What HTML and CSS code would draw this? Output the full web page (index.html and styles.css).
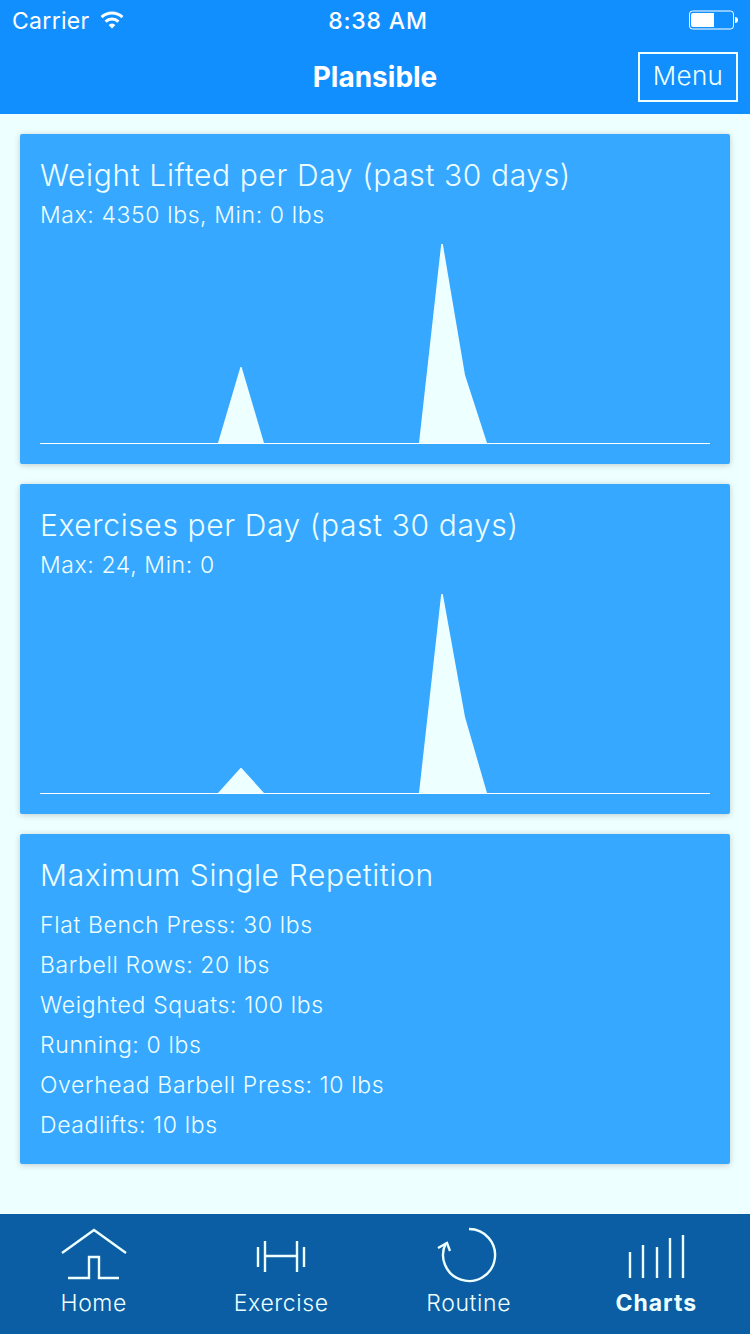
FILE: index.html
```html
<!DOCTYPE html>
<html>
<head>
	<title>Plansible</title>
	<meta charset="utf-8">
	<link rel="stylesheet" href="styles.css">
</head>

<body>
<div id="app">
	<div class="header">
		<div class="status">
			<div class="status-left">
				<span>Carrier</span>
				<svg class="wifi" width="26" height="20" viewBox="0 0 26 20">
					<path d="M13 17.5 L9.6 14 A5 5 0 0 1 16.4 14 Z" fill="#fff"/>
					<path d="M6.6 10.6 A9.2 9.2 0 0 1 19.4 10.6" class="wifi-arc"/>
					<path d="M2.6 6.2 A15 15 0 0 1 23.4 6.2" class="wifi-arc"/>
				</svg>
			</div>
			<span class="time">8:38 AM</span>
			<svg class="battery" width="50" height="20" viewBox="0 0 50 20">
				<rect x="0.5" y="1" width="44" height="18" rx="3" fill="none" stroke="#fff" stroke-width="1"/>
				<path d="M2 5 a2 2 0 0 1 2 -2 H25 V17 H4 a2 2 0 0 1 -2 -2 Z" fill="#fff"/>
				<path d="M46 7 C48 7 49 8 49 10 C49 12 48 13 46 13 Z" fill="#fff"/>
			</svg>
		</div>
		<div class="navbar">
			<span></span>
			<div class="nav-title">Plansible</div>
			<div class="nav-btn">Menu</div>
		</div>
	</div>

	<div class="main">
		<div class="card">
			<h2>Weight Lifted per Day (past 30 days)</h2>
			<p>Max: 4350 lbs, Min: 0 lbs</p>
			<svg class="chart" width="670" height="200" viewBox="0 0 670 200">
				<polygon points="178,199 200.4,123 201.6,123 224,199"/>
				<polygon points="379,199 401.2,0 402.8,0 425,131 447,199"/>
				<line x1="0" y1="199.5" x2="670" y2="199.5"/>
			</svg>
		</div>
		<div class="card">
			<h2>Exercises per Day (past 30 days)</h2>
			<p>Max: 24, Min: 0</p>
			<svg class="chart" width="670" height="200" viewBox="0 0 670 200">
				<polygon points="178,199 200.5,174 201.5,174 224,199"/>
				<polygon points="379,199 401.2,0 402.8,0 425,123 447,199"/>
				<line x1="0" y1="199.5" x2="670" y2="199.5"/>
			</svg>
		</div>
		<div class="card">
			<h2>Maximum Single Repetition</h2>
			<ul class="lifts">
				<li>Flat Bench Press: 30 lbs</li>
				<li>Barbell Rows: 20 lbs</li>
				<li>Weighted Squats: 100 lbs</li>
				<li>Running: 0 lbs</li>
				<li>Overhead Barbell Press: 10 lbs</li>
				<li>Deadlifts: 10 lbs</li>
			</ul>
		</div>
	</div>

	<div class="tabbar">
		<div class="tab">
			<svg width="80" height="60" viewBox="0 0 80 60">
				<path d="M8 29 L40 6 L72 29"/>
				<path d="M14 54 H35 V33 H45 V54 H65"/>
			</svg>
			<span>Home</span>
		</div>
		<div class="tab">
			<svg width="80" height="60" viewBox="0 0 80 60">
				<path d="M17 23 V43 M24 17 V48 M56 17 V48 M63 23 V43 M24 32 H56"/>
			</svg>
			<span>Exercise</span>
		</div>
		<div class="tab">
			<svg width="80" height="60" viewBox="0 0 80 60">
				<path d="M40 5 A26 26 0 1 1 17 19"/>
				<path d="M9 24 L18 19 L21 27"/>
			</svg>
			<span>Routine</span>
		</div>
		<div class="tab active">
			<svg width="80" height="60" viewBox="0 0 80 60">
				<path d="M14 28 V54 M27 21 V54 M41 23 V54 M54 14 V54 M67 11 V54"/>
			</svg>
			<span>Charts</span>
		</div>
	</div>
</div>
</body>
</html>
```

FILE: styles.css
```css
html, body {
	margin:0;
	padding:0;
}
body {
	font-family:Inter, "Noto Sans", sans-serif;
	color:#eeffff;
	background:#eeffff;
}
#app {
	display:flex;
	flex-direction:column;
	width:750px;
	height:1334px;
	overflow:hidden;
}
.header {
	background:#128fff;
	color:#fff;
}
.status {
	display:grid;
	grid-template-columns:1fr auto 1fr;
	align-items:center;
	height:40px;
	padding:0 11px 0 12px;
	font-size:23px;
	letter-spacing:.3px;
}
.status-left {
	display:flex;
	align-items:center;
	gap:9px;
	padding-top:2px;
}
.wifi-arc {
	fill:none;
	stroke:#fff;
	stroke-width:3;
}
.time {
	margin-left:5px;
	padding-top:2px;
	font-weight:500;
	letter-spacing:.8px;
}
.battery {
	justify-self:end;
}
.navbar {
	display:grid;
	grid-template-columns:1fr auto 1fr;
	align-items:center;
	height:74px;
	padding:0 12px;
}
.nav-title {
	font-size:28px;
	font-weight:700;
}
.nav-btn {
	justify-self:end;
	box-sizing:border-box;
	width:100px;
	height:50px;
	line-height:44px;
	border:solid 2px #eeffff;
	color:#eeffff;
	font-size:26px;
	font-weight:300;
	letter-spacing:.4px;
	text-align:center;
}
.main {
	flex:1;
	display:flex;
	flex-direction:column;
	gap:20px;
	padding:20px;
}
.card {
	box-sizing:border-box;
	height:330px;
	padding:21px 20px 0;
	background:#36a8ff;
	border-radius:2px;
	box-shadow:0 1px 6px rgba(0,0,0,.2);
}
.card h2 {
	margin:0;
	font-size:30px;
	font-weight:300;
	line-height:40px;
	letter-spacing:.62px;
}
.card p {
	margin:0;
	font-size:23px;
	font-weight:300;
	line-height:40px;
	letter-spacing:.6px;
}
.chart {
	display:block;
	margin-top:9px;
}
.chart polygon {
	fill:#eeffff;
}
.chart line {
	stroke:#fff;
	stroke-width:1;
}
.lifts {
	list-style:none;
	margin:10px 0 0;
	padding:0;
	font-size:23px;
	font-weight:300;
	line-height:40px;
	letter-spacing:.63px;
}
.tabbar {
	display:grid;
	grid-template-columns:repeat(4, 1fr);
	height:120px;
	background:#0b5ea3;
}
.tab {
	display:flex;
	flex-direction:column;
	align-items:center;
	padding-top:10px;
	font-size:23px;
	font-weight:300;
	letter-spacing:.6px;
}
.tab span {
	line-height:38px;
}
.tab svg {
	display:block;
}
.tab svg path {
	fill:none;
	stroke:#eeffff;
	stroke-width:2.4;
}
.tab.active {
	font-weight:700;
	letter-spacing:1px;
}
```
